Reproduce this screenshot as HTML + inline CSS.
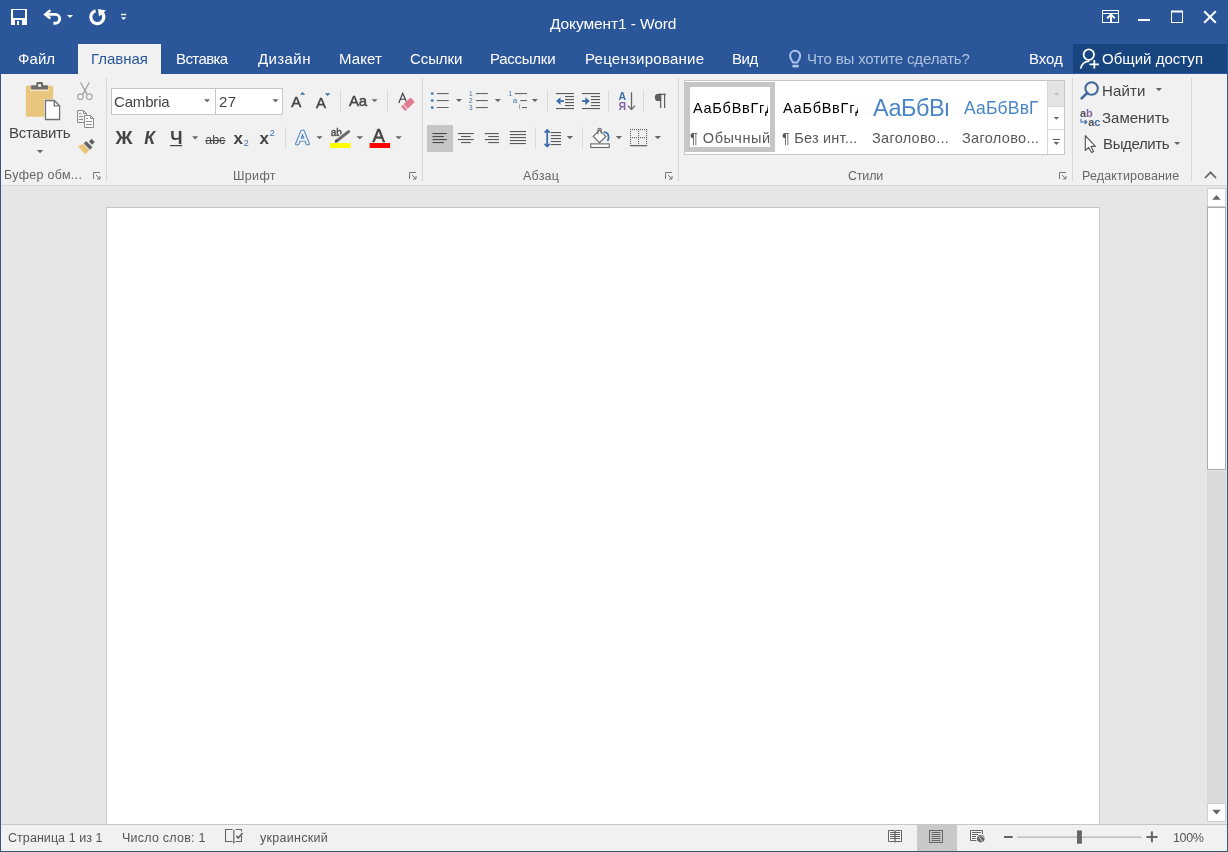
<!DOCTYPE html>
<html><head><meta charset="utf-8"><title>Word</title>
<style>
html,body{margin:0;padding:0}
body{width:1228px;height:852px;position:relative;overflow:hidden;background:#2b579a;font-family:"Liberation Sans",sans-serif}
.r{position:absolute}
.t{position:absolute;white-space:nowrap;will-change:transform}
svg.ov{position:absolute;left:0;top:0;will-change:transform}
</style></head><body>
<div class="r" style="left:0px;top:0px;width:1228px;height:74px;background:#2b579a;"></div><div class="r" style="left:78px;top:44px;width:83px;height:30px;background:#f1f1f1;"></div><div class="r" style="left:1073px;top:44px;width:154px;height:29px;background:#184580;"></div><div class="r" style="left:0px;top:74px;width:1228px;height:778px;background:#385680;"></div><div class="r" style="left:1px;top:74px;width:1226px;height:111px;background:#f1f1f1;"></div><div class="r" style="left:1px;top:185px;width:1226px;height:1px;background:#d6d6d6;"></div><div class="r" style="left:1px;top:186px;width:1226px;height:638px;background:#e6e6e6;"></div><div class="r" style="left:106px;top:207px;width:994px;height:617px;background:#ffffff;box-sizing:border-box;border:1px solid #c6c6c6;border-bottom:none"></div><div class="r" style="left:1px;top:824px;width:1226px;height:1px;background:#c6c6c6;"></div><div class="r" style="left:1px;top:825px;width:1226px;height:26px;background:#f1f1f1;"></div><div class="r" style="left:1207px;top:188px;width:19px;height:19px;background:#ffffff;box-sizing:border-box;border:1px solid #cfcfcf"></div><div class="r" style="left:1207px;top:207px;width:19px;height:263px;background:#ffffff;box-sizing:border-box;border:1px solid #ababab"></div><div class="r" style="left:1207px;top:471px;width:19px;height:332px;background:#dadada;"></div><div class="r" style="left:1207px;top:803px;width:19px;height:19px;background:#ffffff;box-sizing:border-box;border:1px solid #cfcfcf"></div><div class="r" style="left:684px;top:80px;width:381px;height:75px;background:#ffffff;box-sizing:border-box;border:1px solid #c6c6c6"></div><div class="r" style="left:1047px;top:81px;width:17px;height:25px;background:#e3e3e3;box-sizing:border-box;border-left:1px solid #d6d6d6"></div><div class="r" style="left:1047px;top:106px;width:17px;height:48px;background:#ffffff;box-sizing:border-box;border-left:1px solid #d6d6d6;border-top:1px solid #d6d6d6"></div><div class="r" style="left:1048px;top:129px;width:16px;height:1px;background:#d6d6d6;"></div><div class="r" style="left:685px;top:82px;width:90px;height:70px;background:#ffffff;box-sizing:border-box;border:5px solid #c6c6c6"></div><div class="r" style="left:111px;top:88px;width:105px;height:27px;background:#ffffff;box-sizing:border-box;border:1px solid #c6c6c6"></div><div class="r" style="left:215px;top:88px;width:68px;height:27px;background:#ffffff;box-sizing:border-box;border:1px solid #c6c6c6"></div><div class="r" style="left:427px;top:125px;width:26px;height:27px;background:#c6c6c6;"></div><div class="r" style="left:917px;top:825px;width:40px;height:26px;background:#c8c8c8;"></div><div class="t" style="left:549.8px;top:16.1px;font-size:15.5px;line-height:15.5px;letter-spacing:-0.1px;color:#ffffff;">Документ1 - Word</div><div class="t" style="left:18.4px;top:50.8px;font-size:15px;line-height:15px;letter-spacing:0.07px;color:#ffffff;">Файл</div><div class="t" style="left:90.7px;top:50.8px;font-size:15px;line-height:15px;letter-spacing:-0.05px;color:#2b579a;">Главная</div><div class="t" style="left:176.1px;top:50.8px;font-size:15px;line-height:15px;letter-spacing:-0.6px;color:#ffffff;">Вставка</div><div class="t" style="left:258.2px;top:50.8px;font-size:15px;line-height:15px;letter-spacing:0.4px;color:#ffffff;">Дизайн</div><div class="t" style="left:338.9px;top:50.8px;font-size:15px;line-height:15px;letter-spacing:0.1px;color:#ffffff;">Макет</div><div class="t" style="left:409.6px;top:50.8px;font-size:15px;line-height:15px;letter-spacing:-0.1px;color:#ffffff;">Ссылки</div><div class="t" style="left:490.0px;top:50.8px;font-size:15px;line-height:15px;letter-spacing:-0.26px;color:#ffffff;">Рассылки</div><div class="t" style="left:584.5px;top:50.8px;font-size:15px;line-height:15px;letter-spacing:0.25px;color:#ffffff;">Рецензирование</div><div class="t" style="left:731.9px;top:50.8px;font-size:15px;line-height:15px;letter-spacing:-0.45px;color:#ffffff;">Вид</div><div class="t" style="left:807.4px;top:50.8px;font-size:15px;line-height:15px;letter-spacing:-0.14px;color:#aec1df;">Что вы хотите сделать?</div><div class="t" style="left:1029.0px;top:50.8px;font-size:15px;line-height:15px;letter-spacing:-0.03px;color:#ffffff;">Вход</div><div class="t" style="left:1102.1px;top:50.6px;font-size:15px;line-height:15px;letter-spacing:0.02px;color:#ffffff;">Общий доступ</div><div class="t" style="left:8.5px;top:125.3px;font-size:15px;line-height:15px;letter-spacing:-0.3px;color:#444444;">Вставить</div><div class="t" style="left:4.4px;top:169.3px;font-size:12.5px;line-height:12.5px;letter-spacing:0.3px;color:#666666;">Буфер обм...</div><div class="t" style="left:233.0px;top:170.2px;font-size:12.5px;line-height:12.5px;letter-spacing:0.35px;color:#666666;">Шрифт</div><div class="t" style="left:523.0px;top:170.2px;font-size:12.5px;line-height:12.5px;letter-spacing:0.22px;color:#666666;">Абзац</div><div class="t" style="left:847.9px;top:170.2px;font-size:12.5px;line-height:12.5px;letter-spacing:-0.2px;color:#666666;">Стили</div><div class="t" style="left:1082.1px;top:170.2px;font-size:12.5px;line-height:12.5px;letter-spacing:0.15px;color:#666666;">Редактирование</div><div class="t" style="left:113.5px;top:94.4px;font-size:15px;line-height:15px;letter-spacing:-0.17px;color:#444444;">Cambria</div><div class="t" style="left:218.6px;top:93.6px;font-size:15px;line-height:15px;letter-spacing:0.4px;color:#444444;">27</div><div class="t" style="left:689.5px;top:130.5px;font-size:14.5px;line-height:14.5px;letter-spacing:0.51px;color:#595959;">¶ Обычный</div><div class="t" style="left:782.3px;top:130.5px;font-size:14.5px;line-height:14.5px;letter-spacing:0.21px;color:#595959;">¶ Без инт...</div><div class="t" style="left:871.6px;top:130.7px;font-size:14.5px;line-height:14.5px;letter-spacing:0.29px;color:#595959;">Заголово...</div><div class="t" style="left:962.0px;top:130.7px;font-size:14.5px;line-height:14.5px;letter-spacing:0.32px;color:#595959;">Заголово...</div><div class="t" style="left:1102.4px;top:83.2px;font-size:15px;line-height:15px;letter-spacing:0.15px;color:#444444;">Найти</div><div class="t" style="left:1102.1px;top:109.9px;font-size:15px;line-height:15px;letter-spacing:0.0px;color:#444444;">Заменить</div><div class="t" style="left:1102.6px;top:136.4px;font-size:15px;line-height:15px;letter-spacing:-0.36px;color:#444444;">Выделить</div><div class="t" style="left:7.7px;top:832.1px;font-size:12.5px;line-height:12.5px;letter-spacing:0.06px;color:#555555;">Страница 1 из 1</div><div class="t" style="left:121.7px;top:832.1px;font-size:12.5px;line-height:12.5px;letter-spacing:0.24px;color:#555555;">Число слов: 1</div><div class="t" style="left:259.8px;top:832.1px;font-size:12.5px;line-height:12.5px;letter-spacing:0.28px;color:#555555;">украинский</div><div class="t" style="left:1173.0px;top:832.0px;font-size:12.5px;line-height:12.5px;letter-spacing:-0.33px;color:#555555;">100%</div><div class="r" style="left:690px;top:92px;width:78px;height:30px;overflow:hidden"><div class="t" style="left:3.1px;top:9.0px;font-size:14.5px;line-height:14.5px;letter-spacing:0.73px;color:#000000;">АаБбВвГгДд</div></div><div class="r" style="left:780px;top:92px;width:78px;height:30px;overflow:hidden"><div class="t" style="left:2.8px;top:9.0px;font-size:14.5px;line-height:14.5px;letter-spacing:0.74px;color:#000000;">АаБбВвГгДд</div></div><div class="r" style="left:870px;top:88px;width:78px;height:34px;overflow:hidden"><div class="t" style="left:3.3px;top:8.6px;font-size:23.5px;line-height:23.5px;letter-spacing:-0.47px;color:#4a86c6;">АаБбВвГг</div></div><div class="r" style="left:960px;top:88px;width:78px;height:34px;overflow:hidden"><div class="t" style="left:3.5px;top:12.1px;font-size:17.5px;line-height:17.5px;letter-spacing:0.17px;color:#4a86c6;">АаБбВвГгДд</div></div>
<svg class="ov" width="1228" height="852" viewBox="0 0 1228 852">
<!-- QAT -->
<g fill="#fff">
<rect x="11" y="9" width="16" height="16"/>
<rect x="13" y="10" width="12" height="8" fill="#2b579a"/>
<rect x="15" y="20" width="7" height="5" fill="#2b579a"/>
<rect x="17" y="21" width="2" height="4"/>
<polygon points="67,15 73,15 70,18"/>
<rect x="121" y="13.8" width="5.2" height="1.4"/>
<polygon points="121,17.2 126.2,17.2 123.6,20"/>
</g>
<g fill="none" stroke="#fff">
<path d="M46,14.4 H55.3 A4.4,4.4 0 0 1 55.3,23.2 H53.4" stroke-width="2.9"/>
<path d="M50.4,10.3 L45.3,14.4 L50.4,18.5" stroke-width="2.5" stroke-linejoin="miter"/>
<path d="M95.6,10.8 A6.5,6.5 0 1 0 101.2,11.9" stroke-width="3.2"/>
</g>
<polygon points="98,9 106,10.4 99,16.6" fill="#fff"/>
<!-- window controls -->
<g fill="none" stroke="#fff" stroke-width="1">
<rect x="1102.5" y="10.5" width="16" height="12"/>
<line x1="1103" y1="13.5" x2="1118" y2="13.5"/>
<polyline points="1107.2,18.2 1111,14.6 1114.8,18.2" stroke-width="2"/>
<rect x="1171.5" y="11.5" width="11" height="11"/>
<line x1="1171" y1="11.5" x2="1183" y2="11.5" stroke-width="2"/>
<path d="M1204.2,11.2 L1215.8,22.8 M1215.8,11.2 L1204.2,22.8" stroke-width="2"/>
</g>
<rect x="1110" y="14" width="2" height="8" fill="#fff"/>
<rect x="1138" y="19" width="12" height="2" fill="#fff"/>
<!-- lightbulb -->
<g fill="none" stroke="#a9c3ea" stroke-width="2">
<path d="M793.2,62.6 C791.6,60.2 790.1,58.6 790.1,55.8 A5.05,5.05 0 0 1 800.2,55.8 C800.2,58.6 798.7,60.2 797.1,62.6 Z"/>
</g>
<rect x="792.3" y="64.8" width="6.6" height="2.8" rx="1" fill="#a9c3ea"/>
<!-- person -->
<g fill="none" stroke="#fff" stroke-width="1.8">
<circle cx="1088.8" cy="54.6" r="5.2"/>
<path d="M1080.6,68.6 A9.5,9.5 0 0 1 1089.5,61"/>
<path d="M1094.3,60 V68.6 M1089.4,64.4 H1098.9"/>
</g>
<!-- ===== RIBBON: clipboard ===== -->
<rect x="25.9" y="85.7" width="27.2" height="31" rx="1.5" fill="#eac67c"/>
<rect x="30.2" y="88.8" width="18.6" height="2.4" fill="#f6e3bb"/>
<rect x="31.1" y="85.2" width="16.8" height="4.4" rx="0.6" fill="#6d6d6d"/>
<rect x="36.3" y="82.1" width="6.7" height="4" rx="1.2" fill="#6d6d6d"/>
<rect x="38.3" y="84.2" width="2.6" height="2.6" fill="#ffffff"/>
<path d="M44.2,99.2 H54.9 L61,105.2 V121 H44.2 Z" fill="#f1f1f1"/>
<path d="M45.5,100.5 H54.3 L59.6,105.8 V119.5 H45.5 Z" fill="#ffffff" stroke="#707070" stroke-width="1.3"/>
<path d="M54.3,100.5 V105.8 H59.6" fill="none" stroke="#707070" stroke-width="1.3"/>
<polygon points="36.8,150 43.3,150 40.05,153.2" fill="#666"/>
<!-- scissors -->
<g fill="#a3a3a3">
<polygon points="79.9,82.4 81.1,82.2 87.4,93.6 86.2,94.4 83.6,89.4"/>
<polygon points="89.9,82.4 88.7,82.2 82.4,93.6 83.6,94.4 86.2,89.4"/>
</g>
<g fill="none" stroke="#a3a3a3" stroke-width="1.1">
<circle cx="80.5" cy="96.7" r="2.8"/>
<circle cx="89.3" cy="96.7" r="2.8"/>
</g>
<!-- copy -->
<g fill="none" stroke="#8c8c8c" stroke-width="1">
<path d="M84,122.5 H77.5 V110.5 H83.5 L86.5,113.5 V115"/>
<path d="M83.5,110.5 V113.5 H86.5"/>
<path d="M79,113.5 H81 M79,116.5 H83 M79,119.5 H83"/>
<path d="M84.5,115.5 H90.5 L93.5,118.5 V127.5 H84.5 Z" fill="#fff"/>
<path d="M90.5,115.5 V118.5 H93.5"/>
<path d="M86,118.5 H88 M86,121.5 H92 M86,124.5 H92"/>
</g>
<!-- format painter -->
<g transform="translate(88.1,145.4) rotate(-45)">
<rect x="-1.7" y="-4.4" width="3.4" height="8.8" fill="#636363"/>
<rect x="3.3" y="-2.2" width="3.9" height="4.5" fill="#636363"/>
<polygon points="-2.6,-4.5 -2.6,4.3 -8.4,4.1 -7.9,-6.6" fill="#eac67c"/>
</g>
<!-- group separators -->
<g fill="#d6d6d6">
<rect x="106" y="78" width="1" height="103"/>
<rect x="422" y="78" width="1" height="103"/>
<rect x="678" y="78" width="1" height="103"/>
<rect x="1072" y="78" width="1" height="103"/>
<rect x="1191" y="78" width="1" height="103"/>
</g>
<g fill="#d9d9d9">
<rect x="340" y="90" width="1" height="22"/>
<rect x="387" y="90" width="1" height="22"/>
<rect x="285" y="127" width="1" height="22"/>
<rect x="547" y="90" width="1" height="22"/>
<rect x="608" y="90" width="1" height="22"/>
<rect x="643" y="90" width="1" height="22"/>
<rect x="535" y="127" width="1" height="22"/>
<rect x="582" y="127" width="1" height="22"/>
</g>
<!-- dialog launchers -->
<g fill="none" stroke="#777" stroke-width="1">
<path d="M93.5,179 V172.5 H100"/><path d="M96,175 L100,179 M97,179 H100 V176"/>
<path d="M409.5,179 V172.5 H416"/><path d="M412,175 L416,179 M413,179 H416 V176"/>
<path d="M665.5,179 V172.5 H672"/><path d="M668,175 L672,179 M669,179 H672 V176"/>
<path d="M1059.5,179 V172.5 H1066"/><path d="M1062,175 L1066,179 M1063,179 H1066 V176"/>
</g>
<!-- collapse chevron -->
<polyline points="1205,178 1210.5,172.3 1216,178" fill="none" stroke="#666" stroke-width="1.8"/>
<!-- font box arrows -->
<g fill="#666">
<polygon points="204,99.2 210.2,99.2 207.1,102.3"/>
<polygon points="272.4,99.2 278.6,99.2 275.5,102.3"/>
</g>
<!-- ===== FONT row1 ===== -->
<g font-family="Liberation Sans" fill="#444" stroke="#444" stroke-width="0.45">
<text x="291.2" y="106.8" font-size="15">A</text>
<text x="316.1" y="107.7" font-size="15">A</text>
<text x="349.1" y="105.9" font-size="15" letter-spacing="-0.3">Aa</text>
</g>
<g fill="#3c6ea9">
<polygon points="299.9,94.8 305.3,94.8 302.6,92.1"/>
<polygon points="324.8,93.3 330.5,93.3 327.6,96"/>
</g>
<polygon points="371.5,99.3 377.7,99.3 374.6,102.1" fill="#666"/>
<!-- clear formatting -->
<path d="M398.8,103 L402.7,93.3 L406.3,101.5" fill="none" stroke="#444" stroke-width="1.2"/>
<path d="M400.3,99.2 H405" stroke="#444" stroke-width="1.1"/>
<g transform="translate(407.9,104.3) rotate(-43)">
<rect x="-6.6" y="-3.1" width="13.2" height="6.2" rx="0.8" fill="#e07b91"/>
<rect x="-3.9" y="-3.4" width="0.9" height="6.8" fill="#fbe3e8"/>
</g>
<!-- font row2 -->
<g font-family="Liberation Sans" fill="#444">
<text x="115.6" y="143.9" font-size="17.5" font-weight="bold" textLength="17" lengthAdjust="spacingAndGlyphs">Ж</text>
<text x="144.2" y="143.9" font-size="17.5" font-weight="bold" font-style="italic">К</text>
<text x="170.2" y="143.9" font-size="17.5" font-weight="bold">Ч</text>
<text x="205.3" y="143.9" font-size="13.5" textLength="20" lengthAdjust="spacingAndGlyphs">abc</text>
<text x="233.6" y="143.8" font-size="17" font-weight="bold">x</text>
<text x="259.6" y="143.8" font-size="17" font-weight="bold">x</text>
<text x="372.6" y="142.1" font-size="18.5" stroke="#444" stroke-width="0.6">A</text>
</g>
<g font-family="Liberation Sans" fill="#3c6ea9" font-size="9">
<text x="243.8" y="146">2</text>
<text x="269.8" y="135.8">2</text>
</g>
<rect x="170.1" y="145" width="12.1" height="1.2" fill="#444"/>
<rect x="205.2" y="140" width="20.3" height="1.1" fill="#444"/>
<polygon points="192.1,136.2 198.3,136.2 195.2,139.4" fill="#666"/>
<!-- text effects -->
<text x="296.3" y="144.4" font-family="Liberation Sans" font-size="18.8" fill="#4a7ebb" stroke="#4a7ebb" stroke-width="2.4" stroke-linejoin="round">A</text><defs><linearGradient id="teg" x1="0" y1="0" x2="0" y2="1"><stop offset="0" stop-color="#5d90d2"/><stop offset="0.55" stop-color="#dfeaf8"/><stop offset="1" stop-color="#ffffff"/></linearGradient></defs><text x="296.3" y="144.4" font-family="Liberation Sans" font-size="18.8" fill="#f4f9ff" stroke="#f4f9ff" stroke-width="0.3">A</text>
<polygon points="316.3,136.2 322.7,136.2 319.5,139.2" fill="#666"/>
<!-- highlighter -->
<text x="330.8" y="135.8" font-family="Liberation Sans" font-size="10" fill="#555" stroke="#555" stroke-width="0.5">ab</text>
<path d="M336.6,141 L348.6,131.6" stroke="#f1f1f1" stroke-width="5.2"/>
<path d="M336.6,141 L348.6,131.6" stroke="#6a6a6a" stroke-width="3" stroke-linecap="round"/>
<polygon points="334.6,142.8 335.5,139.6 338,141.6" fill="#444"/>
<rect x="330" y="143" width="20.6" height="5" fill="#ffff00"/>
<polygon points="356.4,136.2 363.3,136.2 359.8,139.2" fill="#666"/>
<rect x="369.6" y="143" width="20.5" height="5" fill="#ff0000"/>
<polygon points="395.5,136.2 401.9,136.2 398.7,139.2" fill="#666"/>
<!-- ===== PARAGRAPH ===== -->
<g fill="#3c6ea9">
<circle cx="432.2" cy="93.5" r="1.35"/><circle cx="432.2" cy="100.5" r="1.35"/><circle cx="432.2" cy="107.6" r="1.35"/>
</g>
<g fill="#666">
<rect x="436.9" y="93" width="11.8" height="1.1"/><rect x="436.9" y="100" width="11.8" height="1.1"/><rect x="436.9" y="107" width="11.8" height="1"/>
<polygon points="456,98.9 462,98.9 459,101.9"/>
<rect x="475.9" y="93" width="11.9" height="1.1"/><rect x="475.9" y="100" width="11.9" height="1.1"/><rect x="475.9" y="107" width="11.9" height="1.1"/>
<polygon points="494.7,98.9 501,98.9 497.9,101.9"/>
<rect x="514.9" y="93" width="12.1" height="1.1"/><rect x="520.3" y="100" width="6.7" height="1.1"/><rect x="522" y="107" width="5" height="1.1"/>
<polygon points="531.7,98.9 538,98.9 534.9,101.9"/>
</g>
<g font-family="Liberation Sans" fill="#3c6ea9">
<text x="469" y="96" font-size="6.5">1</text>
<text x="469" y="103" font-size="6.5">2</text>
<text x="469" y="110.1" font-size="6.5">3</text>
<text x="508.2" y="95.8" font-size="6.8">1</text>
<text x="512.8" y="103" font-size="8">a</text>
<text x="519" y="109.3" font-size="7">i</text>
</g>
<!-- indents -->
<g fill="#5a5a5a"><rect x="556" y="93" width="18" height="1.1"/><rect x="565" y="96" width="9" height="1.1"/><rect x="565" y="99" width="9" height="1.1"/><rect x="565" y="102" width="9" height="1.1"/><rect x="565" y="105" width="9" height="1.1"/><rect x="556" y="108" width="18" height="1.1"/><rect x="582" y="93" width="18" height="1.1"/><rect x="591" y="96" width="9" height="1.1"/><rect x="591" y="99" width="9" height="1.1"/><rect x="591" y="102" width="9" height="1.1"/><rect x="591" y="105" width="9" height="1.1"/><rect x="582" y="108" width="18" height="1.1"/></g>
<g fill="none" stroke="#3c6ea9" stroke-width="1.8">
<path d="M563.9,101.1 H559"/>
<path d="M582,101.1 H587"/>
</g>
<polygon points="556,101.1 560.5,97.2 560.5,105" fill="#3c6ea9"/><polygon points="589.8,101.1 585.3,97.2 585.3,105" fill="#3c6ea9"/>
<!-- sort -->
<g font-family="Liberation Sans" font-weight="bold" font-size="10.5">
<text x="618.5" y="100.1" fill="#3c6ea9">А</text>
<text x="618.6" y="109.6" fill="#8064a2">Я</text>
</g>
<path d="M631.5,92.3 V109.4 M627.9,105.6 L631.5,109.6 L635.1,105.6" fill="none" stroke="#666" stroke-width="1.3"/>
<!-- pilcrow -->
<path d="M659,94.4 H666 M660.6,94.4 V108 M664.6,94.4 V108" stroke="#5f5f5f" stroke-width="1.2" fill="none"/><path d="M661.2,93.8 H658.4 A3.6,3.6 0 0 0 658.4,101 H661.2 Z" fill="#5f5f5f"/>
<!-- align -->
<g fill="#4a4a4a">
<rect x="432.5" y="133" width="14.3" height="1.1"/><rect x="432.5" y="136" width="11.5" height="1.1"/><rect x="432.5" y="139" width="14.3" height="1.1"/><rect x="432.5" y="142" width="11.5" height="1.1"/>
</g>
<g fill="#5a5a5a">
<rect x="457.9" y="133" width="15.9" height="1.1"/><rect x="461" y="136" width="9.7" height="1.1"/><rect x="457.9" y="139" width="15.9" height="1.1"/><rect x="461" y="142" width="9.7" height="1.1"/>
<rect x="484.8" y="133" width="14.1" height="1.1"/><rect x="488.2" y="136" width="10.7" height="1.1"/><rect x="484.8" y="139" width="14.1" height="1.1"/><rect x="488.2" y="142" width="10.7" height="1.1"/>
<rect x="509.8" y="131" width="16.2" height="1.1"/><rect x="509.8" y="134" width="16.2" height="1.1"/><rect x="509.8" y="137" width="16.2" height="1.1"/><rect x="509.8" y="140" width="16.2" height="1.1"/><rect x="509.8" y="143" width="16.2" height="1.1"/>
<rect x="550.8" y="132" width="10.2" height="1.1"/><rect x="550.8" y="135" width="10.2" height="1.1"/><rect x="550.8" y="138" width="10.2" height="1.1"/><rect x="550.8" y="141" width="10.2" height="1.1"/><rect x="550.8" y="144" width="10.2" height="1.1"/>
</g>
<g fill="#666">
<polygon points="566.8,136 573,136 569.9,139.3"/>
<polygon points="615.8,136 622,136 618.9,139.3"/>
<polygon points="654.6,136 661,136 657.8,139.3"/>
</g>
<!-- line spacing arrows -->
<g fill="none" stroke="#3c6ea9" stroke-width="1.8">
<path d="M547.2,130.5 V146"/>
<path d="M544.6,132.6 L547.2,130 L549.8,132.6 M544.6,143.8 L547.2,146.4 L549.8,143.8"/>
</g>
<!-- shading -->
<g fill="none" stroke="#666" stroke-width="1.1">
<rect x="590.7" y="143.9" width="18.6" height="3.6" fill="#fff"/>
<path d="M593.2,136.4 L599.5,130.1 L605.8,136.4 L599.5,142.7 Z" fill="#fff"/>
<path d="M598,134.5 V129.8 A1.6,1.6 0 0 1 601.2,129.8 V133.5"/>
</g>
<path d="M603.8,132.2 C607,132 609,134 608.6,138.2 L607.6,141" fill="none" stroke="#3c6ea9" stroke-width="1.8"/>
<!-- borders -->
<g fill="#666"><rect x="630" y="129" width="1.1" height="1.1"/><rect x="630" y="137" width="1.1" height="1.1"/><rect x="632" y="129" width="1.1" height="1.1"/><rect x="632" y="137" width="1.1" height="1.1"/><rect x="634" y="129" width="1.1" height="1.1"/><rect x="634" y="137" width="1.1" height="1.1"/><rect x="636" y="129" width="1.1" height="1.1"/><rect x="636" y="137" width="1.1" height="1.1"/><rect x="638" y="129" width="1.1" height="1.1"/><rect x="638" y="137" width="1.1" height="1.1"/><rect x="640" y="129" width="1.1" height="1.1"/><rect x="640" y="137" width="1.1" height="1.1"/><rect x="642" y="129" width="1.1" height="1.1"/><rect x="642" y="137" width="1.1" height="1.1"/><rect x="644" y="129" width="1.1" height="1.1"/><rect x="644" y="137" width="1.1" height="1.1"/><rect x="646" y="129" width="1.1" height="1.1"/><rect x="646" y="137" width="1.1" height="1.1"/><rect x="630" y="129" width="1.1" height="1.1"/><rect x="638" y="129" width="1.1" height="1.1"/><rect x="646" y="129" width="1.1" height="1.1"/><rect x="630" y="131" width="1.1" height="1.1"/><rect x="638" y="131" width="1.1" height="1.1"/><rect x="646" y="131" width="1.1" height="1.1"/><rect x="630" y="133" width="1.1" height="1.1"/><rect x="638" y="133" width="1.1" height="1.1"/><rect x="646" y="133" width="1.1" height="1.1"/><rect x="630" y="135" width="1.1" height="1.1"/><rect x="638" y="135" width="1.1" height="1.1"/><rect x="646" y="135" width="1.1" height="1.1"/><rect x="630" y="137" width="1.1" height="1.1"/><rect x="638" y="137" width="1.1" height="1.1"/><rect x="646" y="137" width="1.1" height="1.1"/><rect x="630" y="139" width="1.1" height="1.1"/><rect x="638" y="139" width="1.1" height="1.1"/><rect x="646" y="139" width="1.1" height="1.1"/><rect x="630" y="141" width="1.1" height="1.1"/><rect x="638" y="141" width="1.1" height="1.1"/><rect x="646" y="141" width="1.1" height="1.1"/><rect x="630" y="143" width="1.1" height="1.1"/><rect x="638" y="143" width="1.1" height="1.1"/><rect x="646" y="143" width="1.1" height="1.1"/><rect x="630" y="145" width="17.2" height="1.3"/></g>
<!-- ===== STYLES scroll ===== -->
<polygon points="1053.6,94.9 1059.2,94.9 1056.4,92" fill="#c2c2c2"/>
<polygon points="1053.6,116.9 1059.2,116.9 1056.4,119.7" fill="#666"/>
<rect x="1052.7" y="138.9" width="7.2" height="1.1" fill="#666"/>
<polygon points="1053.6,141.9 1059.2,141.9 1056.4,145" fill="#666"/>
<!-- ===== EDITING ===== -->
<g fill="none" stroke="#41699b">
<circle cx="1091.6" cy="88.5" r="6.2" stroke-width="2.1"/>
<path d="M1087.2,93 L1081.6,98.4" stroke-width="2.6" stroke-linecap="round"/>
</g>
<polygon points="1155.8,87.9 1162,87.9 1158.9,91.2" fill="#666"/>
<polygon points="1174,142 1180.3,142 1177.2,145.1" fill="#666"/>
<g font-family="Liberation Sans" font-size="11" font-weight="bold">
<text x="1080" y="116.6" fill="#555">a</text>
<text x="1086" y="116.6" fill="#8064a2">b</text>
<text x="1088.3" y="126" fill="#555">a</text>
<text x="1094.3" y="126" fill="#3c6ea9">c</text>
</g>
<path d="M1081,118.8 V122 H1086.6 M1084.6,120 L1086.8,122 L1084.6,124" fill="none" stroke="#3c6ea9" stroke-width="1.1"/>
<path d="M1085.3,135.6 V150.5 L1088.6,147.4 L1091.6,152.6 L1093.6,151.6 L1090.9,146.4 L1095.4,146.4 Z" fill="#fff" stroke="#555" stroke-width="1.1" stroke-linejoin="round"/>
<!-- scrollbar arrows -->
<polygon points="1212.2,199.8 1220.8,199.8 1216.5,195.1" fill="#666"/>
<polygon points="1212.2,809.8 1220.8,809.8 1216.5,814.5" fill="#666"/>
<!-- ===== STATUS ===== -->
<g fill="none" stroke="#666" stroke-width="1.2">
<path d="M232.5,829.5 H225.5 V841.5 H232.5 M235.5,829.5 H241.5 V831.5 M241.5,835.5 V841.5 H235.5" stroke-width="1.1"/>
<path d="M233.8,830 V843" stroke-width="1.2"/>
<polygon points="232.6,842 235,842 233.8,843.8" fill="#666" stroke="none"/>
<path d="M236.4,835.9 L238.2,838 L242.6,833" stroke-width="1.7"/>
</g>
<!-- read mode -->
<g fill="none" stroke="#666" stroke-width="1">
<path d="M894.5,830.5 H888.5 V841.5 H894.5 M895.5,830.5 H901.5 V841.5 H895.5"/>
<path d="M890,832.5 H900 M890,834.5 H900 M890,836.5 H900 M890,838.5 H900"/>
<path d="M895,830.5 V842.5" stroke-width="1.4"/>
</g>
<!-- print layout -->
<g fill="none" stroke="#666" stroke-width="1">
<rect x="929.5" y="830.5" width="13" height="12"/>
<path d="M931.5,832.5 H940.5 M931.5,834.5 H940.5 M931.5,836.5 H940.5 M931.5,838.5 H940.5 M931.5,840.5 H940.5"/>
</g>
<!-- web layout -->
<g fill="none" stroke="#666" stroke-width="1">
<path d="M976.5,840.5 H970.5 V830.5 H982.5 V834"/>
<path d="M972,832.5 H981 M972,834.5 H978 M972,836.5 H976 M972,838.5 H975.5"/>
</g>
<circle cx="980.8" cy="838.6" r="4.6" fill="#f1f1f1"/>
<circle cx="980.8" cy="838.6" r="3.8" fill="#666"/>
<path d="M978.4,836 C979.8,837.6 980.6,838.6 982.4,841.6 M980.6,834.9 C981.6,836.6 983.4,837.4 984.4,837.2" stroke="#f1f1f1" stroke-width="0.9" fill="none"/>
<!-- zoom -->
<rect x="1004" y="836" width="8.7" height="2" fill="#666"/>
<rect x="1017" y="836.6" width="124.6" height="1" fill="#a6a6a6"/>
<rect x="1077" y="830.4" width="4.9" height="13.3" fill="#666"/>
<rect x="1146.4" y="836" width="11.1" height="2" fill="#666"/>
<rect x="1150.9" y="831.4" width="2" height="10.9" fill="#666"/>

</svg>
</body></html>
